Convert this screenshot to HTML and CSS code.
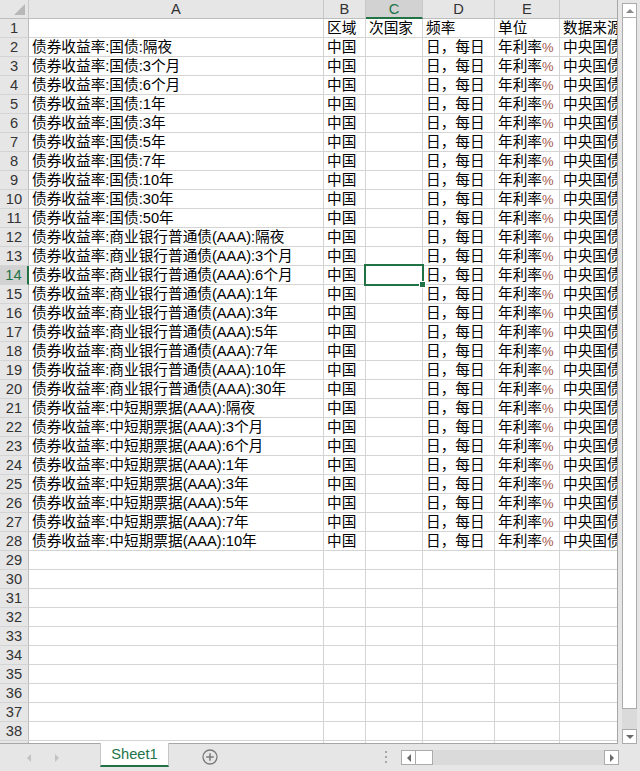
FILE: index.html
```html
<!DOCTYPE html>
<html lang="zh">
<head>
    <meta charset="UTF-8">
    <title>Sheet1</title>
    <link rel="stylesheet" href="styles.css">
</head>
<body>
    <div class="app">
        <div class="main">
            <div class="sheet">
                <div class="grid" id="grid"></div>
                <div class="cursor"><span class="handle"></span></div>
            </div>
            <div class="vscroll">
                <div class="sbtn up"><span class="tri-up"></span></div>
                <div class="vthumb"></div>
                <div class="vtrack"></div>
                <div class="sbtn down"><span class="tri-down"></span></div>
            </div>
        </div>
        <div class="tabbar">
            <div class="nav">
                <span class="tri-left"></span>
                <span class="tri-right"></span>
            </div>
            <div class="tab">Sheet1</div>
            <div class="addsheet">
                <svg width="16" height="16" viewBox="0 0 16 16">
                    <circle cx="8" cy="8" r="7" fill="none" stroke="#7a7a7a" stroke-width="1.3"/>
                    <path d="M8 4.2v7.6M4.2 8h7.6" stroke="#7a7a7a" stroke-width="1.5"/>
                </svg>
            </div>
            <div class="dots"><i></i><i></i><i></i></div>
            <div class="hscroll">
                <div class="sbtn left"><span class="tri-left dark"></span></div>
                <div class="hthumb"></div>
                <div class="htrack"></div>
                <div class="sbtn right"><span class="tri-right dark"></span></div>
            </div>
        </div>
    </div>

    <script>
        const cols = ['A', 'B', 'C', 'D', 'E', 'F'];
        const terms = ['隔夜', '3个月', '6个月', '1年', '3年', '5年', '7年', '10年', '30年', '50年'];

        // A列のデータ
        const names = [];
        terms.forEach(t => names.push('债券收益率:国债:' + t));
        terms.slice(0, 9).forEach(t => names.push('债券收益率:商业银行普通债(AAA):' + t));
        terms.slice(0, 8).forEach(t => names.push('债券收益率:中短期票据(AAA):' + t));

        const grid = document.getElementById('grid');

        function addRow(label, cells, isHeader) {
            const row = document.createElement('div');
            row.className = isHeader ? 'row head' : 'row';
            let html = '';
            if (isHeader) {
                html += '<div class="cell corner"><span class="corner-tri"></span></div>';
                cols.forEach(c => {
                    html += `<div class="cell colhead${c === 'C' ? ' sel' : ''}">${c}</div>`;
                });
            } else {
                html += `<div class="cell rowhead${label === 14 ? ' sel' : ''}">${label}</div>`;
                cells.forEach(v => { html += `<div class="cell">${v}</div>`; });
            }
            row.innerHTML = html;
            grid.appendChild(row);
        }

        addRow(null, null, true);
        addRow(1, ['', '区域', '次国家', '频率', '单位', '数据来源']);
        names.forEach((n, i) => {
            addRow(i + 2, [n, '中国', '', '日，每日', '年利率<span class="pct">%</span>', '中央国债登记结算公司']);
        });
        for (let r = 29; r <= 39; r++) {
            addRow(r, ['', '', '', '', '', '']);
        }
    </script>
</body>
</html>
```

FILE: styles.css
```css
body {
    margin: 0;
    background: #e6e6e6;
    font-family: 'Liberation Sans', 'Noto Sans CJK SC', sans-serif;
    color: #000;
}
.app {
    width: 640px;
    height: 771px;
    overflow: hidden;
    display: flex;
    flex-direction: column;
}
.main {
    display: flex;
    height: 744px;
}
.sheet {
    position: relative;
    width: 617px;
    height: 743px;
    overflow: hidden;
    background: #fff;
    border-right: 1px solid #a6a6a6;
    border-bottom: 1px solid #a6a6a6;
}
.row {
    display: grid;
    grid-template-columns: 29px 295px 42px 57px 72px 65px 130px;
    width: max-content;
}
.cell {
    box-sizing: border-box;
    height: 19px;
    padding: 0 3px;
    border-right: 1px solid #d4d4d4;
    border-bottom: 1px solid #d4d4d4;
    font-size: 14.67px;
    line-height: 18px;
    white-space: nowrap;
    overflow: hidden;
    text-spacing-trim: space-all;
}
.pct {
    color: #a4564a;
    font-size: 13px;
}
.head .cell {
    background: #e6e6e6;
    border-right-color: #c8c8c8;
    border-bottom-color: #bdbdbd;
    color: #333;
}
.colhead { text-align: center; }
.colhead.sel {
    background: #d2d2d2;
    color: #217346;
    border-bottom: 2px solid #217346;
}
.corner {
    position: relative;
}
.corner-tri {
    position: absolute;
    right: 3px;
    bottom: 3px;
    width: 0;
    height: 0;
    border-left: 11px solid transparent;
    border-bottom: 11px solid #b8b8b8;
}
.rowhead {
    background: #e6e6e6;
    color: #333;
    text-align: center;
    padding: 0;
    border-right-color: #bdbdbd;
}
.rowhead.sel {
    background: #d2d2d2;
    color: #217346;
    border-right: 2px solid #217346;
}
.cursor {
    position: absolute;
    left: 364px;
    top: 264px;
    width: 60px;
    height: 22px;
    box-sizing: border-box;
    border: 2px solid #217346;
}
.handle {
    position: absolute;
    right: -4px;
    bottom: -4px;
    width: 5px;
    height: 5px;
    background: #217346;
    border: 1px solid #fff;
}
.vscroll {
    width: 22px;
    display: flex;
    flex-direction: column;
    padding: 3px 0 0 4px;
    box-sizing: border-box;
}
.sbtn {
    box-sizing: border-box;
    width: 15px;
    height: 15px;
    background: #fff;
    border: 1px solid #ababab;
    display: flex;
    align-items: center;
    justify-content: center;
    flex-shrink: 0;
}
.vthumb {
    width: 15px;
    height: 691px;
    box-sizing: border-box;
    background: #fff;
    border: 1px solid #ababab;
    border-top: none;
}
.vtrack {
    width: 15px;
    flex: 1;
    background: #dadada;
}
.tri-up, .tri-down, .tri-left, .tri-right {
    display: inline-block;
    width: 0;
    height: 0;
}
.tri-up {
    border-left: 4px solid transparent;
    border-right: 4px solid transparent;
    border-bottom: 4px solid #8a8a8a;
}
.tri-down {
    border-left: 4px solid transparent;
    border-right: 4px solid transparent;
    border-top: 4px solid #6a6a6a;
}
.tri-left {
    border-top: 4px solid transparent;
    border-bottom: 4px solid transparent;
    border-right: 4px solid #c2c2c2;
}
.tri-right {
    border-top: 4px solid transparent;
    border-bottom: 4px solid transparent;
    border-left: 4px solid #c2c2c2;
}
.tri-left.dark { border-right-color: #6a6a6a; }
.tri-right.dark { border-left-color: #6a6a6a; }
.tabbar {
    position: relative;
    height: 27px;
    display: flex;
    align-items: flex-start;
}
.nav {
    width: 100px;
    display: flex;
    gap: 24px;
    padding: 10px 0 0 27px;
    box-sizing: border-box;
}
.tab {
    width: 69px;
    height: 24px;
    box-sizing: border-box;
    margin-top: -1px;
    background: #fff;
    border-left: 1px solid #c6c6c6;
    border-right: 1px solid #c6c6c6;
    border-bottom: 2px solid #217346;
    color: #217346;
    font-size: 14.67px;
    line-height: 22px;
    text-align: center;
}
.addsheet {
    margin: 5px 0 0 33px;
    height: 16px;
}
.dots {
    display: flex;
    flex-direction: column;
    gap: 3px;
    margin: 7px 0 0 167px;
}
.dots i {
    width: 2px;
    height: 2px;
    background: #a6a6a6;
}
.hscroll {
    display: flex;
    margin: 6px 0 0 14px;
    width: 218px;
    height: 15px;
}
.hthumb {
    width: 17px;
    height: 15px;
    box-sizing: border-box;
    background: #fff;
    border: 1px solid #ababab;
    border-left: none;
}
.htrack {
    flex: 1;
    background: #dadada;
}
```
